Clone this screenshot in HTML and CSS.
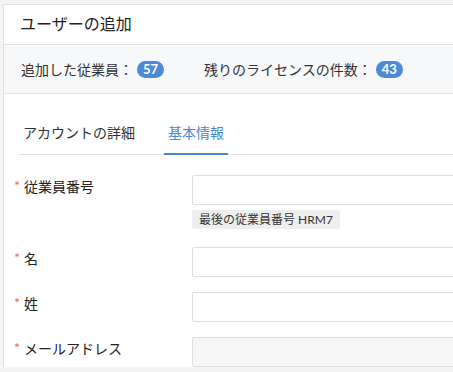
FILE: index.html
```html
<!DOCTYPE html>
<html lang="ja">
<head>
    <meta charset="UTF-8">
    <meta name="viewport" content="width=device-width, initial-scale=1.0">
    <title>ユーザーの追加</title>
    <link rel="stylesheet" href="styles.css">
</head>
<body>
    <div class="panel">
        <!-- ヘッダー -->
        <div class="panel-header">ユーザーの追加</div>

        <!-- ライセンス情報 -->
        <div class="stats">
            <div class="stat">追加した従業員：<span class="badge">57</span></div>
            <div class="stat">残りのライセンスの件数：<span class="badge">43</span></div>
        </div>

        <!-- タブ -->
        <ul class="tabs">
            <li class="tab">アカウントの詳細</li>
            <li class="tab active">基本情報</li>
        </ul>

        <!-- フォーム -->
        <form class="form">
            <div class="row">
                <label class="label"><span class="req">*</span>従業員番号</label>
                <div class="field">
                    <input class="input" type="text">
                    <div class="hint">最後の従業員番号 HRM7</div>
                </div>
            </div>
            <div class="row">
                <label class="label"><span class="req">*</span>名</label>
                <div class="field"><input class="input" type="text"></div>
            </div>
            <div class="row">
                <label class="label"><span class="req">*</span>姓</label>
                <div class="field"><input class="input" type="text"></div>
            </div>
            <div class="row">
                <label class="label"><span class="req">*</span>メールアドレス</label>
                <div class="field"><input class="input disabled" type="text" disabled></div>
            </div>
        </form>
    </div>
</body>
</html>
```
FILE: styles.css
```css
body {
    margin: 0;
    background-color: #f4f4f4;
    font-family: Lato, "Noto Sans CJK JP", sans-serif;
    color: #222;
    overflow: hidden;
}

.panel {
    margin: 4px 0 0 3px;
    background: #fff;
    border-top: 1px solid #e2e2e2;
    border-left: 1px solid #e2e2e2;
}

.panel-header {
    height: 39px;
    line-height: 38px;
    padding-left: 16px;
    font-size: 16px;
    border-bottom: 1px solid #e2e2e2;
}

/* 従業員数とライセンス数 */
.stats {
    display: flex;
    align-items: center;
    gap: 40px;
    height: 48px;
    padding-left: 17px;
    background: #f7f8fa;
    border-bottom: 1px solid #e6e6e6;
    font-size: 14px;
    color: #333;
}

.stat {
    display: flex;
    align-items: center;
}

.badge {
    display: inline-block;
    height: 17px;
    line-height: 17px;
    padding: 0 6px;
    margin-left: 4px;
    border-radius: 9px;
    background: #4a8ad9;
    color: #fff;
    font-size: 13px;
    font-weight: bold;
}

/* タブ */
.tabs {
    display: flex;
    gap: 25px;
    list-style: none;
    margin: 29px 0 0 15px;
    padding: 0;
    border-bottom: 1px solid #e2e2e2;
}

.tab {
    padding: 0 4px 10px;
    line-height: 20px;
    font-size: 14px;
    color: #333;
    margin-bottom: -1px;
    border-bottom: 2px solid transparent;
}

.tab.active {
    color: #4a86d8;
    border-bottom-color: #4a86d8;
}

/* フォーム */
.form {
    display: flex;
    flex-direction: column;
    gap: 15px;
    padding: 20px 0 0 10px;
}

.row {
    display: flex;
    align-items: flex-start;
}

.label {
    width: 178px;
    flex-shrink: 0;
    padding-top: 1px;
    line-height: 20px;
    font-size: 14px;
    color: #222;
}

.req {
    display: inline-block;
    width: 10px;
    color: #e8646e;
    font-size: 14px;
    vertical-align: 1px;
}

.field {
    flex: 1;
    min-width: 0;
    overflow: hidden;
}

.input {
    display: block;
    box-sizing: border-box;
    width: calc(100% + 4px);
    height: 30px;
    margin: 0;
    border: 1px solid #dedede;
    border-radius: 2px;
    background: #fff;
}

.input.disabled {
    background: #f5f6f8;
}

.hint {
    display: inline-block;
    margin: 5px 0 3px;
    padding: 0 7px;
    height: 19px;
    line-height: 19px;
    border-radius: 2px;
    background: #eeeeee;
    font-size: 12px;
    color: #333;
}
```
